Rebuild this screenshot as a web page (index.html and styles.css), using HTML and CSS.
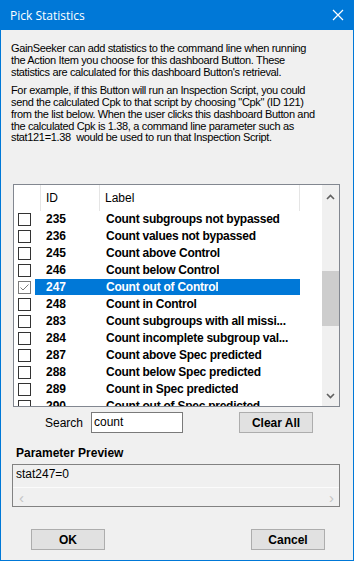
FILE: index.html
```html
<!DOCTYPE html>
<html lang="en">
<head>
  <meta charset="UTF-8" />
  <title>Pick Statistics</title>
  <link rel="stylesheet" href="styles.css">
</head>
<body>

<div id="window">
  <div id="titlebar">
    <span class="title">Pick Statistics</span>
    <svg class="close" width="12" height="12" viewBox="0 0 12 12">
      <path d="M1 1 L11 11 M11 1 L1 11" stroke="#fff" stroke-width="1.2" fill="none" />
    </svg>
  </div>

  <div id="client">
    <div class="intro">
      <p>GainSeeker can add statistics to the command line when running<br>
      the Action Item you choose for this dashboard Button. These<br>
      statistics are calculated for this dashboard Button's retrieval.</p>
      <p>For example, if this Button will run an Inspection Script, you could<br>
      send the calculated Cpk to that script by choosing "Cpk" (ID 121)<br>
      from the list below. When the user clicks this dashboard Button and<br>
      the calculated Cpk is 1.38, a command line parameter such as<br>
      stat121=1.38&nbsp; would be used to run that Inspection Script.</p>
    </div>

    <div id="statList">
      <div class="list-main">
        <div class="list-header">
          <div class="hcell hcheck"></div>
          <div class="hcell hid">ID</div>
          <div class="hcell hlabel">Label</div>
        </div>
        <div id="rows"></div>
      </div>
      <div class="vscroll">
        <div class="sb-btn up">
          <svg width="9" height="6" viewBox="0 0 9 6"><path d="M1 5 L4.5 1.5 L8 5" stroke="#606060" stroke-width="1.6" fill="none" /></svg>
        </div>
        <div class="sb-thumb"></div>
        <div class="sb-btn down">
          <svg width="9" height="6" viewBox="0 0 9 6"><path d="M1 1 L4.5 4.5 L8 1" stroke="#606060" stroke-width="1.6" fill="none" /></svg>
        </div>
      </div>
    </div>

    <div id="searchRow">
      <label class="search-label">Search</label>
      <div class="search-box">count</div>
      <button class="win-btn clear-btn">Clear All</button>
    </div>

    <div class="preview-label">Parameter Preview</div>
    <div id="preview">
      <div class="preview-text">stat247=0</div>
      <div class="hscroll">
        <span class="harrow">&lsaquo;</span>
        <span class="harrow">&rsaquo;</span>
      </div>
    </div>

    <div id="buttons">
      <button class="win-btn">OK</button>
      <button class="win-btn">Cancel</button>
    </div>
  </div>
</div>

<script>
const stats = [
  [235, "Count subgroups not bypassed", false],
  [236, "Count values not bypassed", false],
  [245, "Count above Control", false],
  [246, "Count below Control", false],
  [247, "Count out of Control", true],
  [248, "Count in Control", false],
  [283, "Count subgroups with all missi...", false],
  [284, "Count incomplete subgroup val...", false],
  [287, "Count above Spec predicted", false],
  [288, "Count below Spec predicted", false],
  [289, "Count in Spec predicted", false],
  [290, "Count out of Spec predicted", false]
];

const rows = document.getElementById('rows');
stats.forEach(([id, label, checked]) => {
  const row = document.createElement('div');
  row.className = 'row' + (checked ? ' selected' : '');
  row.innerHTML =
    '<div class="cbox-cell"><span class="cbox">' +
    (checked ? '<svg width="11" height="11" viewBox="0 0 11 11"><path d="M1.5 5.5 L4 8 L9.5 2.5" stroke="#7a7a7a" stroke-width="1" fill="none"/></svg>' : '') +
    '</span></div>' +
    '<div class="sel"><span class="cid">' + id + '</span><span class="clabel">' + label + '</span></div>';
  rows.appendChild(row);
});
</script>

</body>
</html>
```

FILE: styles.css
```css
body {
  margin: 0;
  font-family: "Liberation Sans", Arial, sans-serif;
  font-size: 11px;
  color: #000;
  background: #fff;
}

#window {
  width: 354px;
  height: 561px;
  display: flex;
  flex-direction: column;
  background: #f0f0f0;
}

#titlebar {
  height: 30px;
  flex: none;
  background: #0078d7;
  color: #fff;
  display: flex;
  align-items: center;
  justify-content: space-between;
  padding: 0 10px 0 10px;
}

#titlebar .title {
  font-family: "Open Sans", "Noto Sans", sans-serif;
  font-size: 12px;
}

#client {
  flex: 1;
  border: 1px solid #0078d7;
  border-top: none;
  display: flex;
  flex-direction: column;
}

.intro {
  padding: 13px 0 0 10px;
  line-height: 11.75px;
  letter-spacing: -0.35px;
  white-space: nowrap;
  height: 143px;
  box-sizing: border-box;
}

.intro p {
  margin: 0 0 7px 0;
}

#statList {
  margin: 11px 0 0 12px;
  width: 327px;
  height: 223px;
  box-sizing: border-box;
  border: 1px solid #828790;
  background: #fff;
  display: flex;
  overflow: hidden;
}

.list-main {
  width: 308px;
  overflow: hidden;
}

.list-header {
  height: 26px;
  display: flex;
}

.hcell {
  box-sizing: border-box;
  border-right: 1px solid #e5e5e5;
  line-height: 27px;
  font-size: 12px;
  padding-left: 5px;
}

.hcheck { width: 27px; }
.hid { width: 59px; }
.hlabel { width: 200px; }

.row {
  height: 17px;
  display: flex;
  font-weight: bold;
  font-size: 12px;
}

.cbox-cell {
  width: 21px;
  flex: none;
}

.cbox {
  display: block;
  width: 13px;
  height: 13px;
  box-sizing: border-box;
  border: 1px solid #333;
  margin: 2px 0 0 4px;
  background: #fff;
}

.row.selected .cbox {
  border-color: #7a7a7a;
}

.cbox svg {
  display: block;
}

.sel {
  width: 265px;
  height: 16px;
  line-height: 17px;
  display: flex;
  white-space: nowrap;
}

.row.selected .sel {
  background: #0078d7;
  color: #fff;
}

.cid {
  width: 71px;
  padding-left: 11px;
  box-sizing: border-box;
  flex: none;
}

.clabel {
  overflow: hidden;
  letter-spacing: -0.25px;
}

.vscroll {
  width: 17px;
  background: #f0f0f0;
  display: flex;
  flex-direction: column;
}

.sb-btn {
  display: flex;
  justify-content: center;
  align-items: center;
}

.sb-btn.up { height: 23px; }

.sb-btn.down {
  height: 20px;
  margin-top: auto;
}

.sb-thumb {
  margin-top: 63px;
  height: 55px;
  background: #cdcdcd;
}

#searchRow {
  margin-top: 5px;
  height: 21px;
  display: flex;
  align-items: center;
}

.search-label {
  font-size: 12px;
  width: 44px;
  margin-left: 44px;
}

.search-box {
  width: 92px;
  height: 21px;
  box-sizing: border-box;
  border: 1px solid #7a7a7a;
  background: #fff;
  font-size: 12px;
  line-height: 18px;
  padding-left: 2px;
  margin-left: 2px;
}

.win-btn {
  width: 74px;
  height: 21px;
  box-sizing: border-box;
  border: 1px solid #adadad;
  background: #e1e1e1;
  font-family: "Liberation Sans", Arial, sans-serif;
  font-weight: bold;
  font-size: 12px;
  padding: 0;
  color: #000;
}

.clear-btn {
  margin-left: 56px;
}

.preview-label {
  font-weight: bold;
  font-size: 12px;
  margin: 12px 0 0 15px;
  height: 16px;
  line-height: 16px;
}

#preview {
  margin: 3px 0 0 11px;
  width: 328px;
  height: 43px;
  box-sizing: border-box;
  border: 1px solid #828282;
  background: #f0f0f0;
  display: flex;
  flex-direction: column;
}

.preview-text {
  height: 23px;
  line-height: 16px;
  padding: 1px 0 0 3px;
  box-sizing: border-box;
  border-bottom: 1px solid #fbfbfb;
  font-size: 12px;
}

.hscroll {
  flex: 1;
  display: flex;
  justify-content: space-between;
  align-items: center;
  padding: 0 5px 0 6px;
  color: #c4c4c4;
  font-size: 15px;
}

#buttons {
  margin: 22px 0 0 30px;
  display: flex;
  gap: 146px;
}
```
